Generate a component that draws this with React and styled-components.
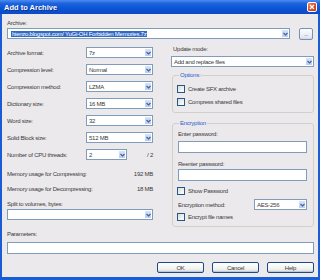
import styled, { createGlobalStyle } from "styled-components";

const GlobalStyle = createGlobalStyle`
  html, body {
    margin: 0;
    padding: 0;
    background: #ebe9ec;
  }
  body {
    font-family: "Liberation Sans", Arial, sans-serif;
    font-size: 6px;
    letter-spacing: -0.25px;
    color: #3a3a3a;
  }
`;

const Window = styled.div`
  width: 320px;
  height: 280px;
  display: flex;
  flex-direction: column;
  overflow: hidden;
`;

const TitleBar = styled.div`
  height: 14px;
  flex: 0 0 14px;
  display: flex;
  align-items: center;
  justify-content: space-between;
  padding: 0 3px 0 4px;
  box-sizing: border-box;
  background: linear-gradient(#4a8cf2 0%, #1f63dc 25%, #0b54d6 60%, #0a4bc6 100%);
  color: #fff;
  font-weight: bold;
  font-size: 7.5px;
  text-shadow: 1px 1px 0 #0a2f86;
  letter-spacing: 0;
`;

const CloseBox = styled.div`
  width: 10px;
  height: 10px;
  box-sizing: border-box;
  border: 1px solid #fff;
  border-radius: 2px;
  background: linear-gradient(135deg, #f08a6a, #d9461f 60%, #c23a14);
  display: grid;
  place-items: center;
`;

const Client = styled.div`
  flex: 1;
  display: flex;
  flex-direction: column;
  padding: 0 4px 0 5px;
  border: 2px solid #1a5bd6;
  border-top: none;
  border-bottom-width: 3px;
  background: #ebe9ec;
`;

const Text = styled.div`
  height: 8px;
  line-height: 8px;
  white-space: nowrap;
  margin-top: ${(p) => p.$mt || 0}px;
  padding-left: ${(p) => p.$pl || 0}px;
`;

const Field = styled.div`
  box-sizing: border-box;
  height: ${(p) => p.$h || 11}px;
  width: ${(p) => (p.$w ? `${p.$w}px` : "auto")};
  flex: ${(p) => (p.$w ? `0 0 ${p.$w}px` : "0 0 auto")};
  margin-top: ${(p) => p.$mt || 0}px;
  margin-left: ${(p) => p.$ml || 0}px;
  border: 1px solid #7f9db9;
  background: #fff;
  display: flex;
  align-items: center;
  line-height: 8px;
  white-space: nowrap;
  overflow: hidden;
`;

const FieldValue = styled.span`
  flex: 1;
  padding-left: 2px;
  overflow: hidden;
`;

const Selected = styled.span`
  background: #316ac5;
  color: #fff;
  padding: 0 1px;
  margin-left: 1px;
`;

const ArrowBtn = styled.div`
  flex: 0 0 8px;
  height: 100%;
  box-sizing: border-box;
  border: 1px solid #fff;
  border-radius: 1px;
  background: linear-gradient(#d6e3fb, #b7cdf6);
  display: grid;
  place-items: center;
`;

const Combo = ({ value, w, h, mt, selected }) => (
  <Field $w={w} $h={h} $mt={mt}>
    <FieldValue>{selected ? <Selected>{value}</Selected> : value}</FieldValue>
    <ArrowBtn>
      <svg width="5" height="4" viewBox="0 0 5 4">
        <path d="M0.5 1 L2.5 3 L4.5 1" stroke="#4d6185" strokeWidth="1.2" fill="none" />
      </svg>
    </ArrowBtn>
  </Field>
);

const ArchiveRow = styled.div`
  display: flex;
  align-items: flex-start;
  margin-top: 1px;
`;

const BrowseBtn = styled.div`
  flex: 0 0 14px;
  height: 12px;
  margin-left: 9px;
  box-sizing: border-box;
  border: 1px solid #7a8fb4;
  border-radius: 2px;
  background: linear-gradient(#fdfdfd, #e6e9f2 80%, #cfd6e6);
  display: grid;
  place-items: center;
  font-size: 5px;
  line-height: 5px;
`;

const Columns = styled.div`
  display: flex;
  align-items: flex-start;
  margin-top: 5px;
`;

const LeftCol = styled.div`
  width: 146px;
  flex: 0 0 146px;
  padding-top: 2px;
  display: flex;
  flex-direction: column;
`;

const RightCol = styled.div`
  flex: 1;
  margin-left: 18px;
  display: flex;
  flex-direction: column;
`;

const Row = styled.div`
  display: flex;
  align-items: center;
  height: ${(p) => p.$h || 11}px;
  margin-top: ${(p) => p.$mt || 0}px;
  margin-bottom: ${(p) => p.$mb || 0}px;
  padding-left: ${(p) => p.$pl || 0}px;
  white-space: nowrap;
`;

const RowLabel = styled.div`
  width: ${(p) => p.$w || 79}px;
  flex: 0 0 ${(p) => p.$w || 79}px;
`;

const Suffix = styled.div`
  flex: 1;
  text-align: right;
`;

const Group = styled.fieldset`
  margin: ${(p) => p.$mt || 0}px 0 0 1px;
  padding: 0 6px ${(p) => p.$pb || 5}px 4px;
  border: 1px solid #d2d0c8;
  border-radius: 3px;
  min-inline-size: 0;
  display: flex;
  flex-direction: column;
`;

const Legend = styled.legend`
  padding: 0 1px;
  margin-left: 2px;
  line-height: 8px;
  height: 8px;
  color: #2a5ec8;
`;

const Check = styled.span`
  display: inline-block;
  width: 8px;
  height: 8px;
  box-sizing: border-box;
  border: 1px solid #24568a;
  background: linear-gradient(135deg, #dcdcd5, #fff);
  margin-right: 3px;
`;

const CheckRow = ({ label, mt }) => (
  <Row $h={8} $mt={mt}>
    <Check />
    {label}
  </Row>
);

const Buttons = styled.div`
  display: flex;
  justify-content: flex-end;
  gap: 8px;
  margin-top: 8px;
`;

const Button = styled.div`
  width: 47px;
  height: 11px;
  box-sizing: border-box;
  border: 1px solid #1d4a87;
  border-radius: 2px;
  background: linear-gradient(#ffffff, #f1f1ec 70%, #d8d6ce);
  box-shadow: inset 0 -1px 0 #b9c8e6;
  display: grid;
  place-items: center;
  line-height: 8px;
`;

export default function App() {
  return (
    <>
      <GlobalStyle />
      <Window>
        <TitleBar>
          <span>Add to Archive</span>
          <CloseBox>
            <svg width="6" height="6" viewBox="0 0 6 6">
              <path d="M1 1 L5 5 M5 1 L1 5" stroke="#fff" strokeWidth="1.4" />
            </svg>
          </CloseBox>
        </TitleBar>
        <Client>
          <Text $mt={5}>Archive:</Text>
          <ArchiveRow>
            <Combo w={283} selected value="hienzo.blogspot.com/ YuGi-OH Forbidden Memories.7z" />
            <BrowseBtn>...</BrowseBtn>
          </ArchiveRow>
          <Columns>
            <LeftCol>
              <Row $mb={6}><RowLabel>Archive format:</RowLabel><Combo w={67} value="7z" /></Row>
              <Row $mb={6}><RowLabel>Compression level:</RowLabel><Combo w={67} value="Normal" /></Row>
              <Row $mb={6}><RowLabel>Compression method:</RowLabel><Combo w={67} value="LZMA" /></Row>
              <Row $mb={6}><RowLabel>Dictionary size:</RowLabel><Combo w={67} value="16 MB" /></Row>
              <Row $mb={6}><RowLabel>Word size:</RowLabel><Combo w={67} value="32" /></Row>
              <Row $mb={6}><RowLabel>Solid Block size:</RowLabel><Combo w={67} value="512 MB" /></Row>
              <Row><RowLabel>Number of CPU threads:</RowLabel><Combo w={41} value="2" /><Suffix>/ 2</Suffix></Row>
              <Row $h={8} $mt={10}>Memory usage for Compressing:<Suffix>192 MB</Suffix></Row>
              <Row $h={8} $mt={7}>Memory usage for Decompressing:<Suffix>18 MB</Suffix></Row>
              <Text $mt={7}>Split to volumes, bytes:</Text>
              <Combo mt={1} value="" />
            </LeftCol>
            <RightCol>
              <Text $pl={2}>Update mode:</Text>
              <Combo mt={3} value="Add and replace files" />
              <Group $mt={4} $pb={6}>
                <Legend>Options:</Legend>
                <CheckRow mt={6} label="Create SFX archive" />
                <CheckRow mt={5} label="Compress shared files" />
              </Group>
              <Group $mt={6} $pb={5}>
                <Legend>Encryption</Legend>
                <Text $mt={3} $pl={1}>Enter password:</Text>
                <Field $mt={3} $h={12} $ml={1} />
                <Text $mt={7} $pl={1}>Reenter password:</Text>
                <Field $mt={1} $h={12} $ml={1} />
                <CheckRow mt={6} label="Show Password" />
                <Row $mt={4} $pl={1}>
                  <RowLabel $w={76}>Encryption method:</RowLabel>
                  <Combo w={53} value="AES-256" />
                </Row>
                <CheckRow mt={3} label="Encrypt file names" />
              </Group>
            </RightCol>
          </Columns>
          <Text $mt={3}>Parameters:</Text>
          <Field $mt={4} $h={12} />
          <Buttons>
            <Button>OK</Button>
            <Button>Cancel</Button>
            <Button>Help</Button>
          </Buttons>
        </Client>
      </Window>
    </>
  );
}
